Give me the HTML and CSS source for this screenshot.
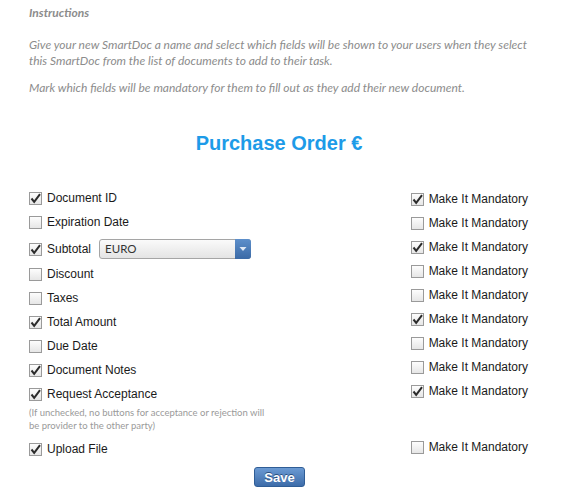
FILE: index.html
```html
<!DOCTYPE html>
<html lang="en">
<head>
  <meta charset="UTF-8">
  <title>SmartDoc</title>
  <link rel="stylesheet" href="styles.css">
</head>
<body>
  <div class="instructions">
    <h3>Instructions</h3>
    <p>Give your new SmartDoc a name and select which fields will be shown to your users when they select this SmartDoc from the list of documents to add to their task.</p>
    <p>Mark which fields will be mandatory for them to fill out as they add their new document.</p>
  </div>

  <h1 class="doc-title">Purchase Order €</h1>

  <div class="fields">
    <div class="col-left">
      <label class="row"><span class="box checked"><svg viewBox="0 0 13 13"><path d="M2.5 6.5 L5.2 9.8 L11 2.2" /></svg></span>Document ID</label>
      <label class="row"><span class="box"></span>Expiration Date</label>
      <label class="row row-select"><span class="box checked"><svg viewBox="0 0 13 13"><path d="M2.5 6.5 L5.2 9.8 L11 2.2" /></svg></span>Subtotal
        <span class="select">EURO<span class="arrow"><svg viewBox="0 0 8 6"><path d="M0.5 1 L7.5 1 L4 5 Z" /></svg></span></span>
      </label>
      <label class="row"><span class="box"></span>Discount</label>
      <label class="row"><span class="box"></span>Taxes</label>
      <label class="row"><span class="box checked"><svg viewBox="0 0 13 13"><path d="M2.5 6.5 L5.2 9.8 L11 2.2" /></svg></span>Total Amount</label>
      <label class="row"><span class="box"></span>Due Date</label>
      <label class="row"><span class="box checked"><svg viewBox="0 0 13 13"><path d="M2.5 6.5 L5.2 9.8 L11 2.2" /></svg></span>Document Notes</label>
      <label class="row"><span class="box checked"><svg viewBox="0 0 13 13"><path d="M2.5 6.5 L5.2 9.8 L11 2.2" /></svg></span>Request Acceptance</label>
      <p class="note">(If unchecked, no buttons for acceptance or rejection will be provider to the other party)</p>
      <label class="row"><span class="box checked"><svg viewBox="0 0 13 13"><path d="M2.5 6.5 L5.2 9.8 L11 2.2" /></svg></span>Upload File</label>
    </div>

    <div class="col-right">
      <label class="row"><span class="box checked"><svg viewBox="0 0 13 13"><path d="M2.5 6.5 L5.2 9.8 L11 2.2" /></svg></span>Make It Mandatory</label>
      <label class="row"><span class="box"></span>Make It Mandatory</label>
      <label class="row"><span class="box checked"><svg viewBox="0 0 13 13"><path d="M2.5 6.5 L5.2 9.8 L11 2.2" /></svg></span>Make It Mandatory</label>
      <label class="row"><span class="box"></span>Make It Mandatory</label>
      <label class="row"><span class="box"></span>Make It Mandatory</label>
      <label class="row"><span class="box checked"><svg viewBox="0 0 13 13"><path d="M2.5 6.5 L5.2 9.8 L11 2.2" /></svg></span>Make It Mandatory</label>
      <label class="row"><span class="box"></span>Make It Mandatory</label>
      <label class="row"><span class="box"></span>Make It Mandatory</label>
      <label class="row"><span class="box checked"><svg viewBox="0 0 13 13"><path d="M2.5 6.5 L5.2 9.8 L11 2.2" /></svg></span>Make It Mandatory</label>
      <label class="row row-last"><span class="box"></span>Make It Mandatory</label>
    </div>
  </div>

  <div class="actions">
    <button class="btn-save">Save</button>
  </div>
</body>
</html>
```

FILE: styles.css
```css
body {
  margin: 0;
  padding: 0;
  font-family: "Liberation Sans", Arial, sans-serif;
  background: #fff;
  color: #222;
}
.instructions {
  padding: 5px 20px 0 29px;
  font-family: Lato, "Open Sans", sans-serif;
  font-style: italic;
  color: #8c8c8c;
  font-size: 12px;
}
.instructions h3 {
  margin: 0 0 16px;
  font-size: 12px;
  font-weight: bold;
  line-height: 16px;
}
.instructions p {
  margin: 0 0 11px;
  line-height: 16px;
}
.doc-title {
  margin: 35px 0 0;
  padding-right: 6px;
  text-align: center;
  font-size: 20px;
  line-height: 24px;
  color: #1d9be8;
}
.fields {
  display: flex;
  justify-content: space-between;
  padding: 31px 36px 0 29px;
}
.col-right {
  padding-top: 1px;
}
.row {
  display: flex;
  align-items: center;
  height: 24px;
  font-size: 12px;
  color: #1a1a1a;
}
.row-select {
  height: 26px;
  padding-top: 2px;
}
.row-last {
  margin-top: 32px;
}
.box {
  width: 11px;
  height: 11px;
  border: 1px solid #9a9a9a;
  background: linear-gradient(#fdfdfd, #e6e6e6);
  margin-right: 5px;
  flex: none;
  position: relative;
}
.box svg {
  position: absolute;
  left: -1px;
  top: -1px;
  width: 13px;
  height: 13px;
}
.box svg path {
  fill: none;
  stroke: #2b2b2b;
  stroke-width: 2;
}
.select {
  position: relative;
  margin-left: 8px;
  width: 145px;
  height: 18px;
  border: 1px solid #a5a5a5;
  border-radius: 3px;
  background: linear-gradient(#fafafa, #e4e4e4);
  font-family: Lato, "Open Sans", sans-serif;
  font-size: 11.5px;
  line-height: 18px;
  padding-left: 5px;
  color: #333;
}
.arrow {
  position: absolute;
  right: -1px;
  top: -1px;
  width: 16px;
  height: 20px;
  border-radius: 0 3px 3px 0;
  background: linear-gradient(#5d8fcb, #3b6aa6);
  display: flex;
  align-items: center;
  justify-content: center;
}
.arrow svg {
  width: 8px;
  height: 6px;
}
.arrow path {
  fill: #dfe8f4;
}
.note {
  margin: 0 0 5px;
  width: 240px;
  font-family: Lato, "Open Sans", sans-serif;
  font-size: 9.5px;
  line-height: 13px;
  color: #9a9a9a;
}
.actions {
  display: flex;
  justify-content: center;
  padding: 6px 5px 0 0;
}
.btn-save {
  width: 51px;
  height: 20px;
  border: 1px solid #2f5d96;
  border-radius: 3px;
  background: linear-gradient(#6b9ad3, #3d6ca9);
  color: #fff;
  font-family: "Liberation Sans", Arial, sans-serif;
  font-weight: bold;
  font-size: 13px;
  text-shadow: 0 -1px 0 #2b4f7e;
  padding: 0;
  cursor: pointer;
}
```
